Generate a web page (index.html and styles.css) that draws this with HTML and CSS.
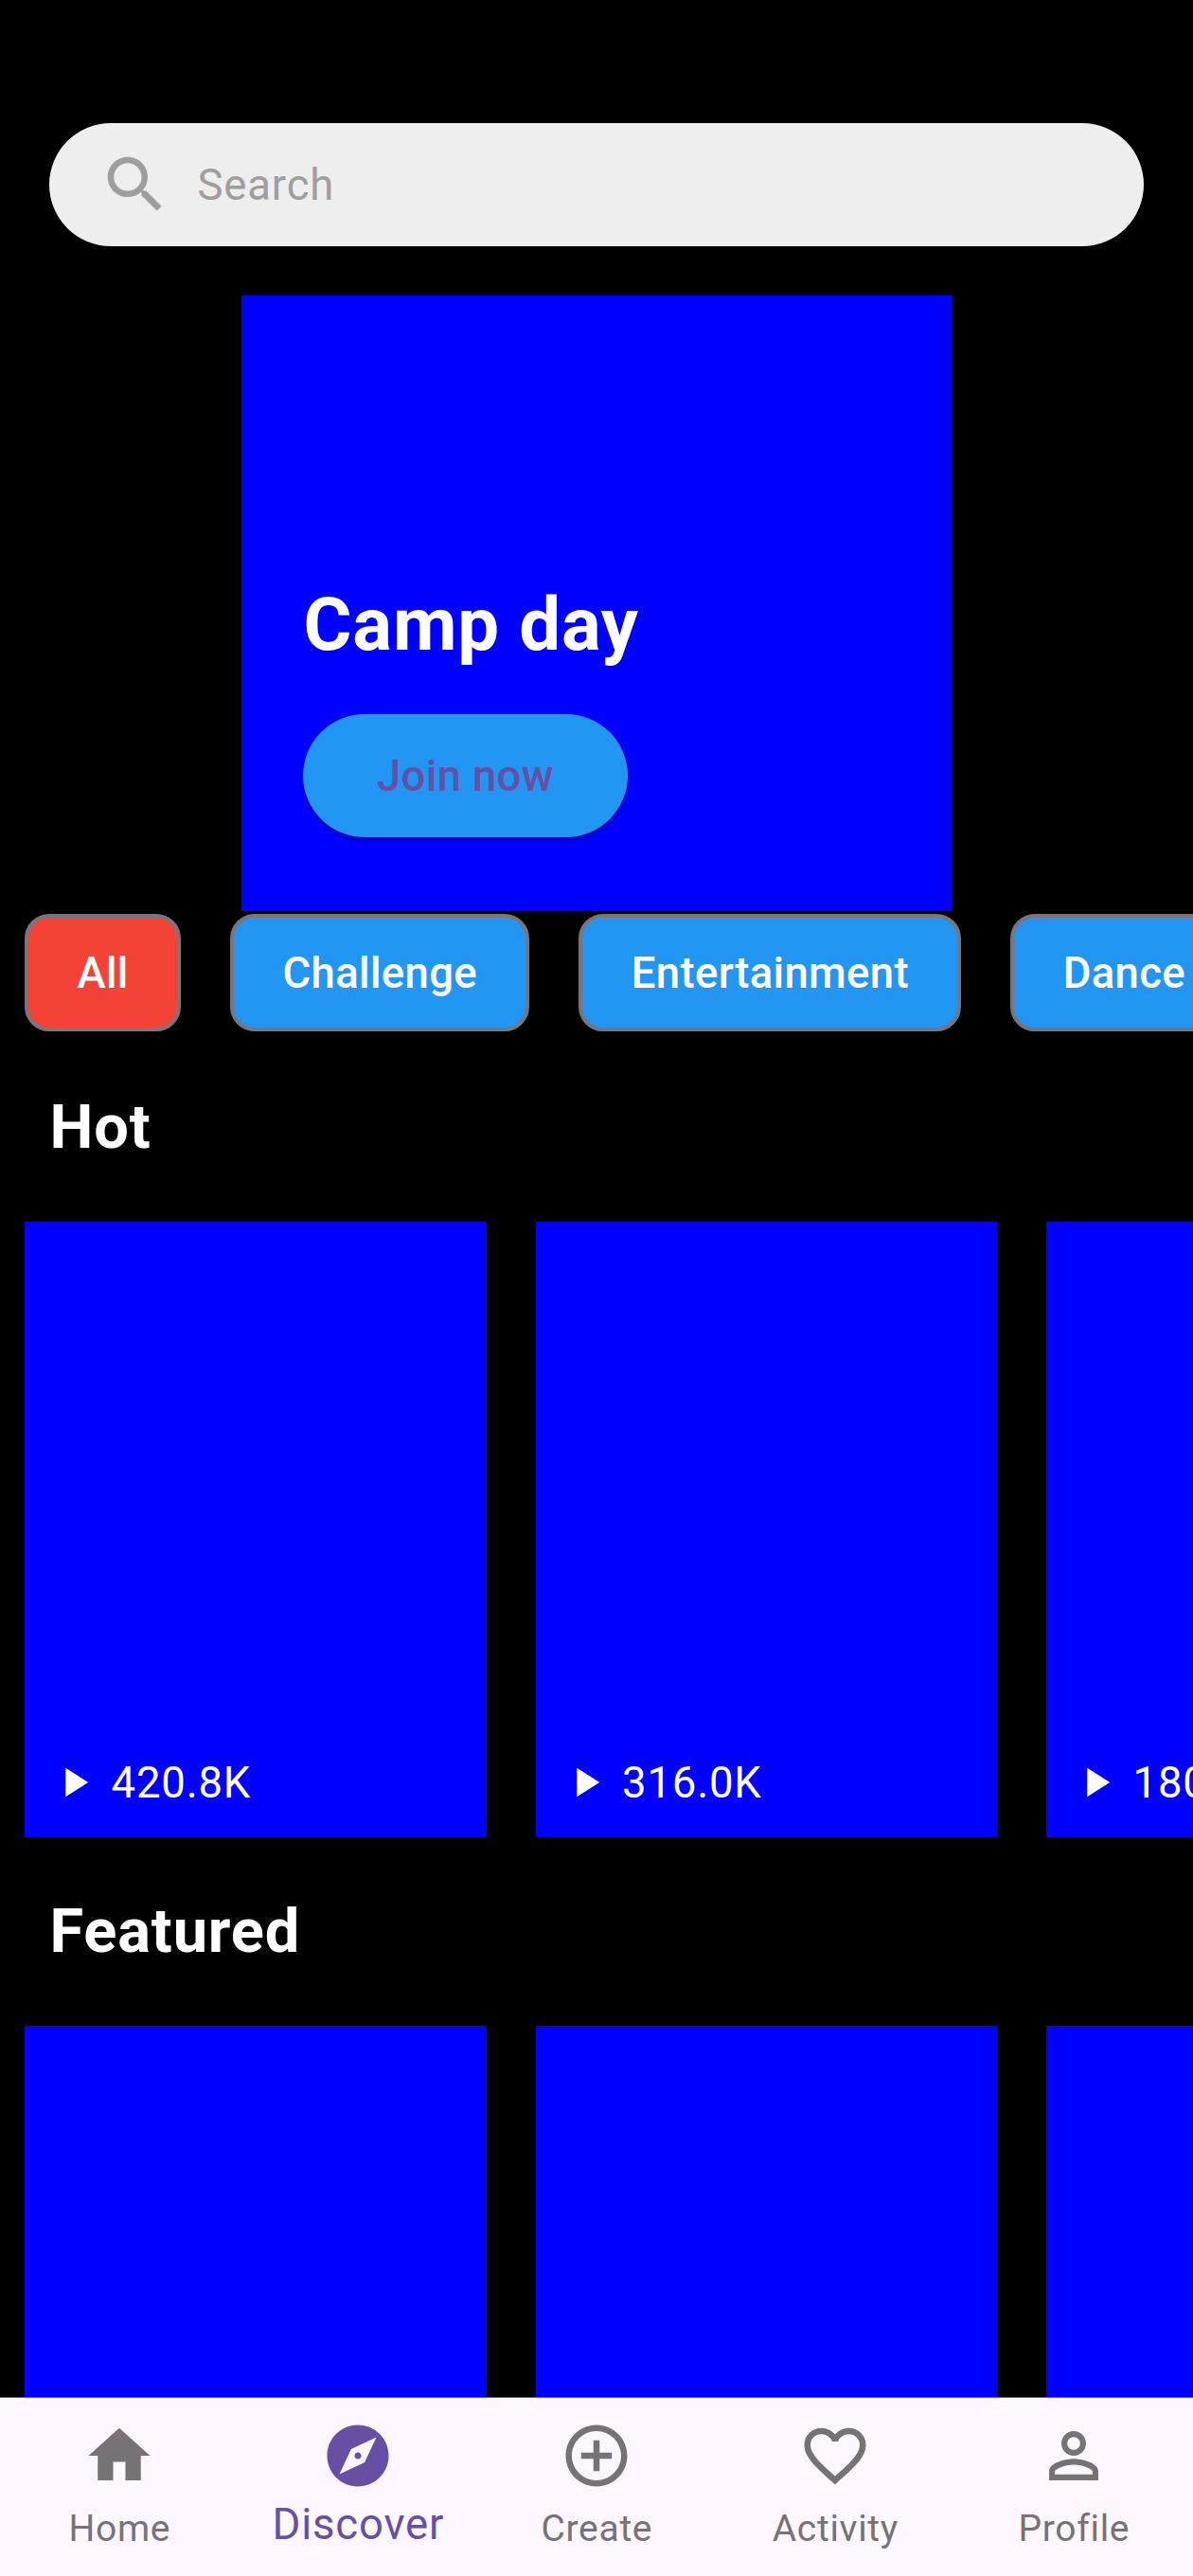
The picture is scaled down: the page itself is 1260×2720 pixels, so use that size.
FILE: index.html
```html
<!DOCTYPE html>
<html lang="en">
<head>
<meta charset="utf-8">
<title>Discover</title>
<link rel="stylesheet" href="styles.css">
</head>
<body>
<div class="app">
  <main class="content">
    <div class="search">
      <svg class="icon" viewBox="0 0 24 24"><path d="M15.5 14h-.79l-.28-.27C15.41 12.59 16 11.11 16 9.5 16 5.91 13.09 3 9.5 3S3 5.91 3 9.5 5.91 16 9.5 16c1.61 0 3.09-.59 4.23-1.57l.27.28v.79l5 4.99L20.49 19l-4.99-5zm-6 0C7.01 14 5 11.99 5 9.5S7.01 5 9.5 5 14 7.01 14 9.5 11.99 14 9.5 14z"/></svg>
      <span>Search</span>
    </div>
    <section class="banner">
      <h1 class="banner-title">Camp day</h1>
      <button class="join">Join now</button>
    </section>
    <div class="chips">
      <span class="chip selected">All</span>
      <span class="chip">Challenge</span>
      <span class="chip">Entertainment</span>
      <span class="chip">Dance</span>
    </div>
    <h2 class="heading">Hot</h2>
    <div class="cards">
      <div class="card"><svg class="play" viewBox="0 0 24 24"><path d="M8 5v14l11-7z"/></svg><span>420.8K</span></div>
      <div class="card"><svg class="play" viewBox="0 0 24 24"><path d="M8 5v14l11-7z"/></svg><span>316.0K</span></div>
      <div class="card"><svg class="play" viewBox="0 0 24 24"><path d="M8 5v14l11-7z"/></svg><span>180.0K</span></div>
    </div>
    <h2 class="heading">Featured</h2>
    <div class="cards">
      <div class="card"></div>
      <div class="card"></div>
      <div class="card"></div>
    </div>
  </main>
  <nav class="nav">
    <a class="tab"><svg class="icon" viewBox="0 0 24 24"><path d="M10 20v-6h4v6h5v-8h3L12 3 2 12h3v8z"/></svg><span>Home</span></a>
    <a class="tab active"><svg class="icon" viewBox="0 0 24 24"><path d="M12 10.9c-.61 0-1.1.49-1.1 1.1s.49 1.1 1.1 1.1c.61 0 1.1-.49 1.1-1.1s-.49-1.1-1.1-1.1zM12 2C6.48 2 2 6.48 2 12s4.48 10 10 10 10-4.480 10-10S17.520 2 12 2zm2.190 12.190L6 18l3.810-8.190L18 6l-3.810 8.190z"/></svg><span>Discover</span></a>
    <a class="tab"><svg class="icon" viewBox="0 0 24 24"><path d="M13 7h-2v4H7v2h4v4h2v-4h4v-2h-4V7zm-1-5C6.480 2 2 6.480 2 12s4.480 10 10 10 10-4.480 10-10S17.520 2 12 2zm0 18c-4.410 0-8-3.590-8-8s3.590-8 8-8 8 3.590 8 8-3.590 8-8 8z"/></svg><span>Create</span></a>
    <a class="tab"><svg class="icon" viewBox="0 0 24 24"><path d="M16.500 3c-1.740 0-3.410.81-4.500 2.090C10.910 3.810 9.240 3 7.500 3 4.420 3 2 5.420 2 8.500c0 3.780 3.400 6.860 8.550 11.540L12 21.350l1.450-1.320C18.600 15.360 22 12.280 22 8.500 22 5.420 19.580 3 16.500 3zm-4.400 15.550l-.1.100-.1-.1C7.140 14.240 4 11.390 4 8.500 4 6.500 5.500 5 7.500 5c1.540 0 3.040.99 3.570 2.360h1.870C13.460 5.990 14.960 5 16.500 5c2 0 3.500 1.500 3.500 3.500 0 2.890-3.140 5.740-7.900 10.050z"/></svg><span>Activity</span></a>
    <a class="tab"><svg class="icon" viewBox="0 0 24 24"><path d="M12 5.900c1.160 0 2.100.94 2.100 2.100s-.94 2.100-2.100 2.100S9.900 9.160 9.900 8s.94-2.100 2.100-2.100m0 9c2.970 0 6.100 1.460 6.100 2.100v1.100H5.900V17c0-.64 3.130-2.100 6.100-2.100M12 4C9.790 4 8 5.790 8 8s1.790 4 4 4 4-1.790 4-4-1.790-4-4-4zm0 9c-2.670 0-8 1.340-8 4v3h16v-3c0-2.660-5.330-4-8-4z"/></svg><span>Profile</span></a>
  </nav>
</div>
</body>
</html>
```
FILE: styles.css
```css
* { box-sizing: border-box; }

body {
  margin: 0;
  background: #000;
  font-family: Roboto, sans-serif;
  font-size: 45.5px;
  letter-spacing: 0.8125px;
}

.app {
  display: flex;
  flex-direction: column;
  width: 1260px;
  height: 2720px;
  overflow: hidden;
}

.content {
  flex: 1;
  min-height: 0;
  overflow: hidden;
  padding-top: 130px;
}

.icon {
  flex: none;
  width: 78px;
  height: 78px;
  fill: currentColor;
}

.search {
  display: flex;
  align-items: center;
  gap: 26.5px;
  height: 130px;
  margin: 0 52px 52px;
  padding-left: 52px;
  border-radius: 65px;
  background: #eee;
  color: #9e9e9e;
}

.banner {
  display: flex;
  flex-direction: column;
  align-items: flex-start;
  justify-content: flex-end;
  gap: 39px;
  width: 750px;
  height: 650px;
  margin: 0 auto;
  padding: 0 65px 78px;
  background: #00f;
}

.banner-title {
  margin: 0;
  padding-left: 0.5px;
  color: #fff;
  font-size: 78px;
  font-weight: 700;
  line-height: 111px;
}

.join {
  height: 130px;
  padding: 0 78px;
  border: 0;
  border-radius: 65px;
  background: #2196f3;
  box-shadow: 0 3px 4px rgba(0, 0, 0, 0.3);
  color: #6750a4;
  font: 500 45.5px Roboto, sans-serif;
  letter-spacing: 0.325px;
}

.chips {
  display: flex;
  gap: 52px;
  height: 129px;
  padding: 3px 26px 2px;
}

.chip {
  display: flex;
  flex: none;
  align-items: center;
  padding: 0 51.4px;
  border: 4px solid #79747e;
  border-radius: 26px;
  background: #2196f3;
  color: #fff;
  font-weight: 500;
  letter-spacing: 0.325px;
}

.chip.selected { background: #f44336; }

.heading {
  margin: 0;
  padding: 52px 52.5px;
  color: #fff;
  font-size: 65px;
  font-weight: 700;
  line-height: 95px;
}

.cards {
  display: flex;
  gap: 52px;
  padding-left: 26px;
}

.card {
  display: flex;
  flex: none;
  align-items: flex-end;
  gap: 13.5px;
  width: 487.5px;
  height: 650px;
  padding: 0 26px 25px;
  background: #00f;
  color: #fff;
  line-height: 65px;
}

.play {
  width: 52px;
  height: 52px;
  margin-bottom: 7px;
  fill: currentColor;
}

.nav {
  display: flex;
  flex: none;
  height: 189px;
  border-top: 1px solid #6f6b70;
  background: #fef7ff;
  color: #777275;
}

.tab {
  display: flex;
  flex: 1;
  flex-direction: column;
  align-items: center;
  padding-top: 22px;
  font-size: 39px;
  letter-spacing: 0.7px;
  line-height: 46px;
}

.tab span {
  margin-top: 15px;
  padding-left: 0.7px;
}

.tab.active {
  color: #6750a4;
  font-size: 45.5px;
  letter-spacing: 0.8125px;
}

.tab.active span { margin-top: 11px; }
```
